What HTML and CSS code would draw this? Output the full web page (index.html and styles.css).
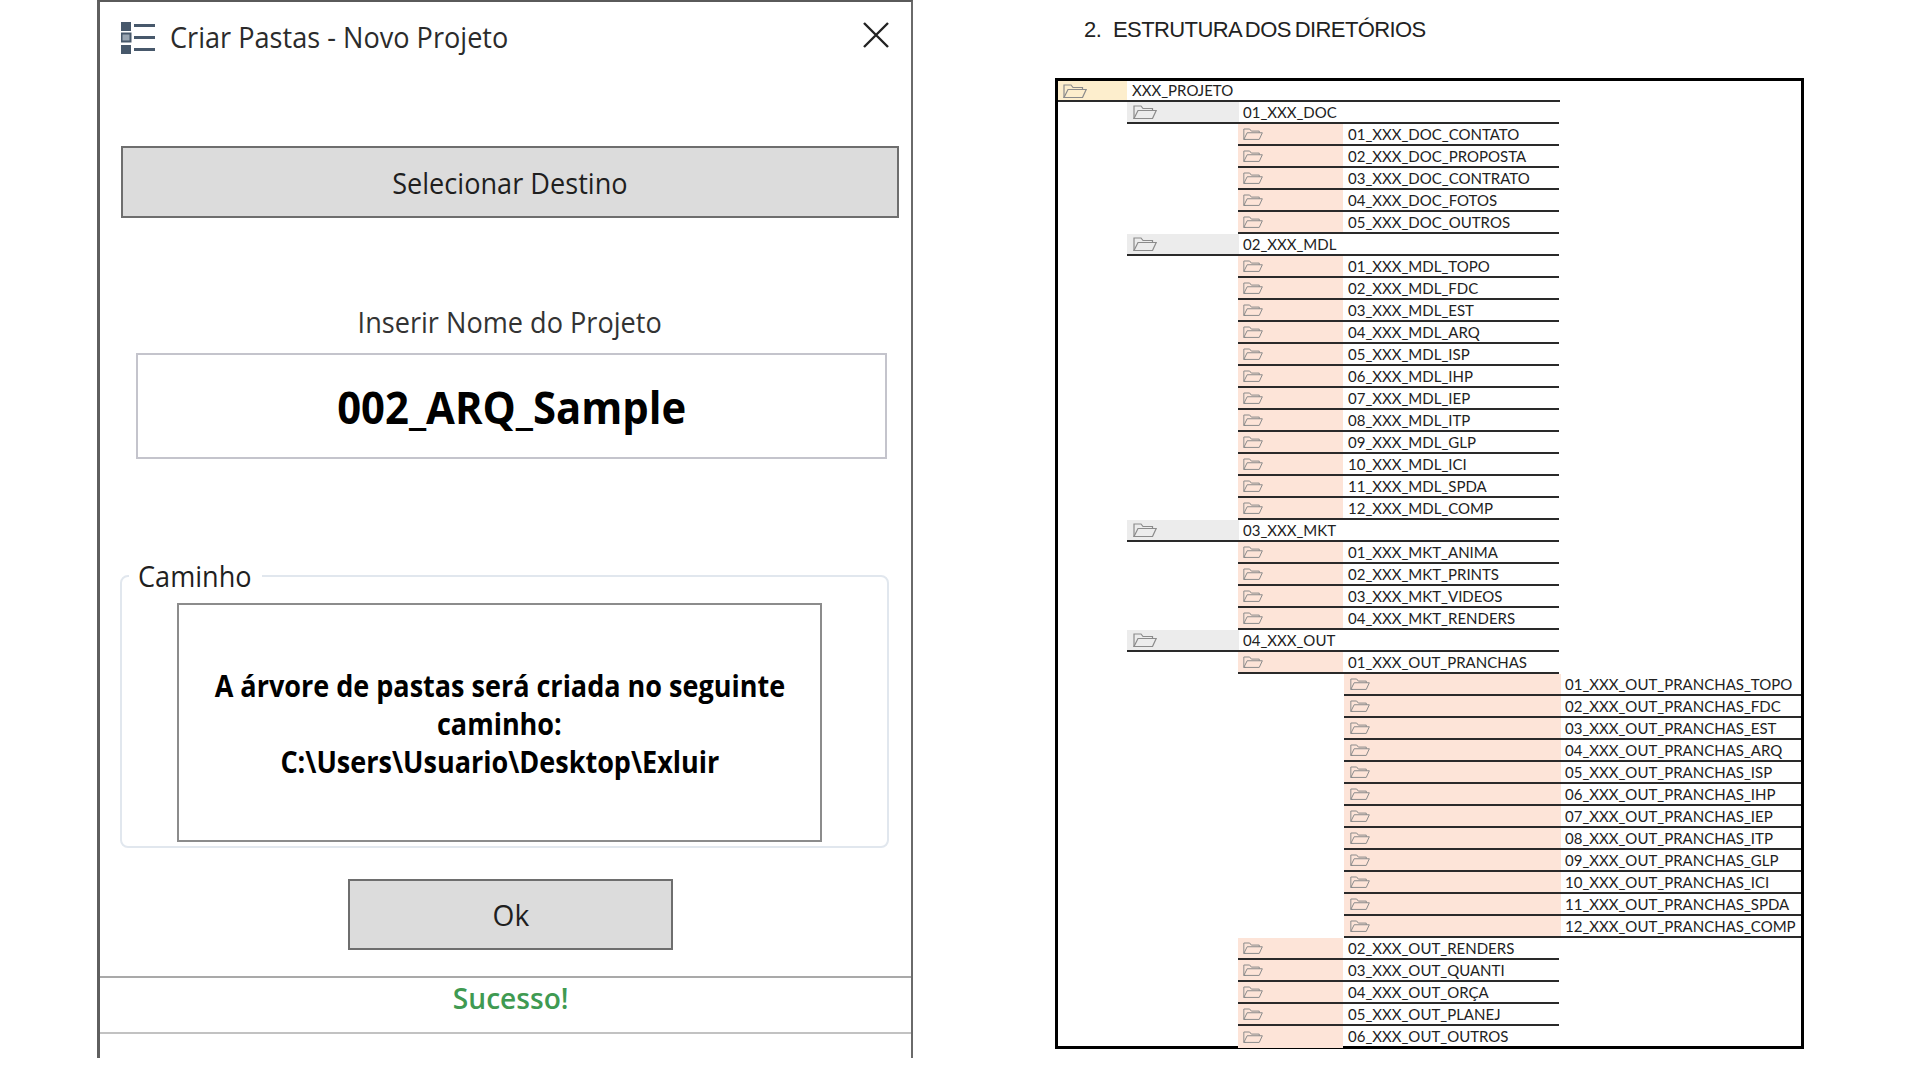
FILE: index.html

```html
<!DOCTYPE html>
<html lang="pt">
<head>
    <meta charset="UTF-8">
    <title>Criar Pastas - Novo Projeto</title>
    <link rel="stylesheet" href="styles.css">
</head>
<body>
    <svg class="defs" width="0" height="0">
        <symbol id="folder" viewBox="0 0 24 14">
            <path d="M3.5 13.5 L1 13.5 L1 1 L8 1 L10 3.5 L19.5 3.5 L19.5 5.5" fill="none" stroke="currentColor" stroke-width="1.2"/>
            <path d="M5 5.5 L23.2 5.5 L19.5 13.5 L1 13.5 Z" fill="none" stroke="currentColor" stroke-width="1.2"/>
        </symbol>
    </svg>

    <div class="dialog">
        <div class="titlebar">
            <svg class="menu-icon" width="34" height="32" viewBox="0 0 34 32">
                <rect x="0" y="0" width="10" height="9" fill="#47586b"/>
                <rect x="0.5" y="11.5" width="9" height="8" fill="#9aa6b2" stroke="#47586b" stroke-width="2"/>
                <rect x="0" y="23" width="10" height="9" fill="#47586b"/>
                <rect x="13" y="2" width="21" height="3" fill="#47586b"/>
                <rect x="13" y="14" width="21" height="3" fill="#47586b"/>
                <rect x="13" y="26" width="21" height="3" fill="#47586b"/>
            </svg>
            <span class="title"><span class="fit fit-title">Criar Pastas - Novo Projeto</span></span>
            <svg class="close-icon" width="28" height="28" viewBox="0 0 28 28">
                <path d="M2 2 L26 26 M26 2 L2 26" stroke="#222" stroke-width="2.4" fill="none"/>
            </svg>
        </div>

        <div class="content">
            <div class="btn btn-dest"><span class="fit fit-btn">Selecionar Destino</span></div>
            <div class="label"><span class="fit fit-btn">Inserir Nome do Projeto</span></div>
            <div class="name-box"><span class="fit fit-name">002_ARQ_Sample</span></div>

            <fieldset class="group">
                <legend><span class="fit fit-legend">Caminho</span></legend>
                <div class="path-box">
                    <div class="path-line"><span class="fit fit-path">A árvore de pastas será criada no seguinte</span></div>
                    <div class="path-line"><span class="fit fit-path">caminho:</span></div>
                    <div class="path-line"><span class="fit fit-path">C:\Users\Usuario\Desktop\Exluir</span></div>
                </div>
            </fieldset>

            <div class="btn btn-ok"><span class="fit fit-ok">Ok</span></div>
        </div>

        <div class="status"><span class="fit fit-status">Sucesso!</span></div>
    </div>

    <div class="doc">
        <h2 class="doc-title"><span class="num">2.</span>ESTRUTURA DOS DIRETÓRIOS</h2>
        <div class="tree">
            <div class="row lv0"><div class="ico"><svg class="f"><use href="#folder"/></svg></div><div class="name">XXX_PROJETO</div></div>

            <div class="row lv1"><div class="ico"><svg class="f"><use href="#folder"/></svg></div><div class="name">01_XXX_DOC</div></div>
            <div class="row lv2"><div class="ico"><svg class="f"><use href="#folder"/></svg></div><div class="name">01_XXX_DOC_CONTATO</div></div>
            <div class="row lv2"><div class="ico"><svg class="f"><use href="#folder"/></svg></div><div class="name">02_XXX_DOC_PROPOSTA</div></div>
            <div class="row lv2"><div class="ico"><svg class="f"><use href="#folder"/></svg></div><div class="name">03_XXX_DOC_CONTRATO</div></div>
            <div class="row lv2"><div class="ico"><svg class="f"><use href="#folder"/></svg></div><div class="name">04_XXX_DOC_FOTOS</div></div>
            <div class="row lv2"><div class="ico"><svg class="f"><use href="#folder"/></svg></div><div class="name">05_XXX_DOC_OUTROS</div></div>

            <div class="row lv1"><div class="ico"><svg class="f"><use href="#folder"/></svg></div><div class="name">02_XXX_MDL</div></div>
            <div class="row lv2"><div class="ico"><svg class="f"><use href="#folder"/></svg></div><div class="name">01_XXX_MDL_TOPO</div></div>
            <div class="row lv2"><div class="ico"><svg class="f"><use href="#folder"/></svg></div><div class="name">02_XXX_MDL_FDC</div></div>
            <div class="row lv2"><div class="ico"><svg class="f"><use href="#folder"/></svg></div><div class="name">03_XXX_MDL_EST</div></div>
            <div class="row lv2"><div class="ico"><svg class="f"><use href="#folder"/></svg></div><div class="name">04_XXX_MDL_ARQ</div></div>
            <div class="row lv2"><div class="ico"><svg class="f"><use href="#folder"/></svg></div><div class="name">05_XXX_MDL_ISP</div></div>
            <div class="row lv2"><div class="ico"><svg class="f"><use href="#folder"/></svg></div><div class="name">06_XXX_MDL_IHP</div></div>
            <div class="row lv2"><div class="ico"><svg class="f"><use href="#folder"/></svg></div><div class="name">07_XXX_MDL_IEP</div></div>
            <div class="row lv2"><div class="ico"><svg class="f"><use href="#folder"/></svg></div><div class="name">08_XXX_MDL_ITP</div></div>
            <div class="row lv2"><div class="ico"><svg class="f"><use href="#folder"/></svg></div><div class="name">09_XXX_MDL_GLP</div></div>
            <div class="row lv2"><div class="ico"><svg class="f"><use href="#folder"/></svg></div><div class="name">10_XXX_MDL_ICI</div></div>
            <div class="row lv2"><div class="ico"><svg class="f"><use href="#folder"/></svg></div><div class="name">11_XXX_MDL_SPDA</div></div>
            <div class="row lv2"><div class="ico"><svg class="f"><use href="#folder"/></svg></div><div class="name">12_XXX_MDL_COMP</div></div>

            <div class="row lv1"><div class="ico"><svg class="f"><use href="#folder"/></svg></div><div class="name">03_XXX_MKT</div></div>
            <div class="row lv2"><div class="ico"><svg class="f"><use href="#folder"/></svg></div><div class="name">01_XXX_MKT_ANIMA</div></div>
            <div class="row lv2"><div class="ico"><svg class="f"><use href="#folder"/></svg></div><div class="name">02_XXX_MKT_PRINTS</div></div>
            <div class="row lv2"><div class="ico"><svg class="f"><use href="#folder"/></svg></div><div class="name">03_XXX_MKT_VIDEOS</div></div>
            <div class="row lv2"><div class="ico"><svg class="f"><use href="#folder"/></svg></div><div class="name">04_XXX_MKT_RENDERS</div></div>

            <div class="row lv1"><div class="ico"><svg class="f"><use href="#folder"/></svg></div><div class="name">04_XXX_OUT</div></div>
            <div class="row lv2"><div class="ico"><svg class="f"><use href="#folder"/></svg></div><div class="name">01_XXX_OUT_PRANCHAS</div></div>
            <div class="row lv3"><div class="ico"><svg class="f"><use href="#folder"/></svg></div><div class="name">01_XXX_OUT_PRANCHAS_TOPO</div></div>
            <div class="row lv3"><div class="ico"><svg class="f"><use href="#folder"/></svg></div><div class="name">02_XXX_OUT_PRANCHAS_FDC</div></div>
            <div class="row lv3"><div class="ico"><svg class="f"><use href="#folder"/></svg></div><div class="name">03_XXX_OUT_PRANCHAS_EST</div></div>
            <div class="row lv3"><div class="ico"><svg class="f"><use href="#folder"/></svg></div><div class="name">04_XXX_OUT_PRANCHAS_ARQ</div></div>
            <div class="row lv3"><div class="ico"><svg class="f"><use href="#folder"/></svg></div><div class="name">05_XXX_OUT_PRANCHAS_ISP</div></div>
            <div class="row lv3"><div class="ico"><svg class="f"><use href="#folder"/></svg></div><div class="name">06_XXX_OUT_PRANCHAS_IHP</div></div>
            <div class="row lv3"><div class="ico"><svg class="f"><use href="#folder"/></svg></div><div class="name">07_XXX_OUT_PRANCHAS_IEP</div></div>
            <div class="row lv3"><div class="ico"><svg class="f"><use href="#folder"/></svg></div><div class="name">08_XXX_OUT_PRANCHAS_ITP</div></div>
            <div class="row lv3"><div class="ico"><svg class="f"><use href="#folder"/></svg></div><div class="name">09_XXX_OUT_PRANCHAS_GLP</div></div>
            <div class="row lv3"><div class="ico"><svg class="f"><use href="#folder"/></svg></div><div class="name">10_XXX_OUT_PRANCHAS_ICI</div></div>
            <div class="row lv3"><div class="ico"><svg class="f"><use href="#folder"/></svg></div><div class="name">11_XXX_OUT_PRANCHAS_SPDA</div></div>
            <div class="row lv3"><div class="ico"><svg class="f"><use href="#folder"/></svg></div><div class="name">12_XXX_OUT_PRANCHAS_COMP</div></div>
            <div class="row lv2"><div class="ico"><svg class="f"><use href="#folder"/></svg></div><div class="name">02_XXX_OUT_RENDERS</div></div>
            <div class="row lv2"><div class="ico"><svg class="f"><use href="#folder"/></svg></div><div class="name">03_XXX_OUT_QUANTI</div></div>
            <div class="row lv2"><div class="ico"><svg class="f"><use href="#folder"/></svg></div><div class="name">04_XXX_OUT_ORÇA</div></div>
            <div class="row lv2"><div class="ico"><svg class="f"><use href="#folder"/></svg></div><div class="name">05_XXX_OUT_PLANEJ</div></div>
            <div class="row lv2 last"><div class="ico"><svg class="f"><use href="#folder"/></svg></div><div class="name">06_XXX_OUT_OUTROS</div></div>
        </div>
    </div>
</body>
</html>
```

FILE: styles.css

```css
:root {
    --btn-grey: #dcdcdc;
    --btn-line: #6e6e6e;
    --peach: #fde4d8;
    --cream: #fdeecd;
    --light: #ececec;
    --ink: #1f1f1f;
}
* {
    box-sizing: border-box;
}
body {
    margin: 0;
    height: 1080px;
    overflow: hidden;
    display: flex;
    align-items: flex-start;
    background-color: #fff;
    color: var(--ink);
    font-family: "Open Sans", sans-serif;
}
.defs {
    position: absolute;
}

/* squeezed text: the reference is stretched vertically */
.fit {
    display: inline-block;
    white-space: nowrap;
    transform-origin: center;
}
.fit-title {
    font-size: 29px;
    transform: scaleX(0.935);
    transform-origin: left center;
}
.fit-btn { font-size: 29px; transform: scaleX(0.935); }
.fit-name { font-size: 44px; font-weight: 700; color: #000; transform: scaleX(0.95); }
.fit-legend { font-size: 29px; transform: scaleX(0.935); transform-origin: left center; }
.fit-path { font-size: 30px; font-weight: 700; color: #000; transform: scaleX(0.9); }
.fit-ok { font-size: 29px; transform: scaleX(0.97); }
.fit-status { font-size: 29px; font-weight: 600; color: #3f9a52; transform: scaleX(0.97); }

.dialog {
    width: 816px;
    height: 1058px;
    margin-left: 97px;
    border-top: 2px solid #5a5a5a;
    border-left: 3px solid #5f5f5f;
    border-right: 2px solid #6a6a6a;
    flex-shrink: 0;
}
.titlebar {
    height: 72px;
    padding: 19px 21px 0 21px;
    display: flex;
    align-items: flex-start;
}
.menu-icon {
    margin-top: 1px;
    flex-shrink: 0;
}
.title {
    flex: 1;
    margin-top: -2px;
    margin-left: 15px;
    line-height: 36px;
    color: #2b2b2b;
}
.content {
    width: 778px;
    margin-left: 21px;
    padding-top: 72px;
    display: flex;
    flex-direction: column;
}
.btn {
    display: flex;
    align-items: center;
    justify-content: center;
    background-color: var(--btn-grey);
    border: 2px solid var(--btn-line);
}
.btn-dest {
    height: 72px;
}
.btn-ok {
    width: 325px;
    height: 71px;
    margin-top: 31px;
    align-self: center;
    padding-left: 2px;
}
.label {
    height: 40px;
    margin-top: 84px;
    line-height: 40px;
    text-align: center;
    color: #333;
}
.name-box {
    width: 751px;
    height: 106px;
    margin: 11px 0 0 15px;
    padding-top: 2px;
    display: flex;
    align-items: center;
    justify-content: center;
    border: 2px solid #c4c4cc;
}
.group {
    width: 769px;
    height: 291px;
    margin: 98px 0 0 -1px;
    padding: 0;
    min-width: 0;
    border: 2px solid #e1e7ee;
    border-radius: 8px;
}
.group legend {
    margin-left: 7px;
    padding: 0 9px;
    height: 38px;
    line-height: 38px;
    width: 133px;
}
.path-box {
    width: 645px;
    height: 239px;
    margin: 8px 0 0 55px;
    padding-top: 62px;
    border: 2px solid #8c8c8c;
    text-align: center;
}
.path-line {
    height: 38px;
    line-height: 38px;
}
.status {
    height: 58px;
    margin-top: 26px;
    padding-left: 10px;
    border-top: 2px solid #a9a9a9;
    border-bottom: 2px solid #c2c2c2;
    text-align: center;
    line-height: 40px;
}

/* right side: folder tree */
.doc {
    width: 749px;
    margin-left: 142px;
    flex-shrink: 0;
}
.doc-title {
    height: 78px;
    margin: 0;
    padding: 17px 0 0 29px;
    font-family: "Liberation Sans", sans-serif;
    font-weight: 400;
    font-size: 22px;
    line-height: 26px;
    letter-spacing: -0.6px;
    word-spacing: -1.5px;
    color: #222;
}
.num {
    display: inline-block;
    width: 29px;
}
.tree {
    height: 971px;
    border: 3px solid #000;
    font-family: Lato, sans-serif;
    font-size: 15px;
    color: #222;
}
.row {
    height: 22px;
    display: flex;
    align-items: stretch;
    border-bottom: 2px solid #2a2a2a;
}
.row.last {
    border-bottom: none;
}
.ico {
    display: flex;
    align-items: center;
    flex-shrink: 0;
}
.f {
    display: block;
    color: #8b8b8b;
}
.name {
    line-height: 20px;
    white-space: nowrap;
}
.lv0 {
    height: 21px;
    width: 502px;
}
.lv0 .ico {
    width: 69px;
    padding-left: 5px;
    background-color: var(--cream);
}
.lv0 .f, .lv1 .f {
    width: 24px;
    height: 14px;
}
.lv0 .name {
    padding-left: 5px;
    line-height: 18px;
}
.lv1 {
    width: 432px;
    margin-left: 69px;
}
.lv1 .ico {
    width: 112px;
    padding-left: 6px;
    background-color: var(--light);
}
.lv1 .name {
    padding-left: 4px;
}
.lv2 {
    width: 321px;
    margin-left: 180px;
}
.lv2 .ico {
    width: 105px;
    padding-left: 5px;
    background-color: var(--peach);
}
.lv2 .f, .lv3 .f {
    width: 20px;
    height: 12px;
}
.lv2 .name {
    padding-left: 5px;
    line-height: 21px;
}
.lv3 {
    margin-left: 286px;
}
.lv3 .ico {
    width: 217px;
    padding-left: 6px;
    background-color: var(--peach);
}
.lv3 .name {
    padding-left: 4px;
    line-height: 21px;
}
```
